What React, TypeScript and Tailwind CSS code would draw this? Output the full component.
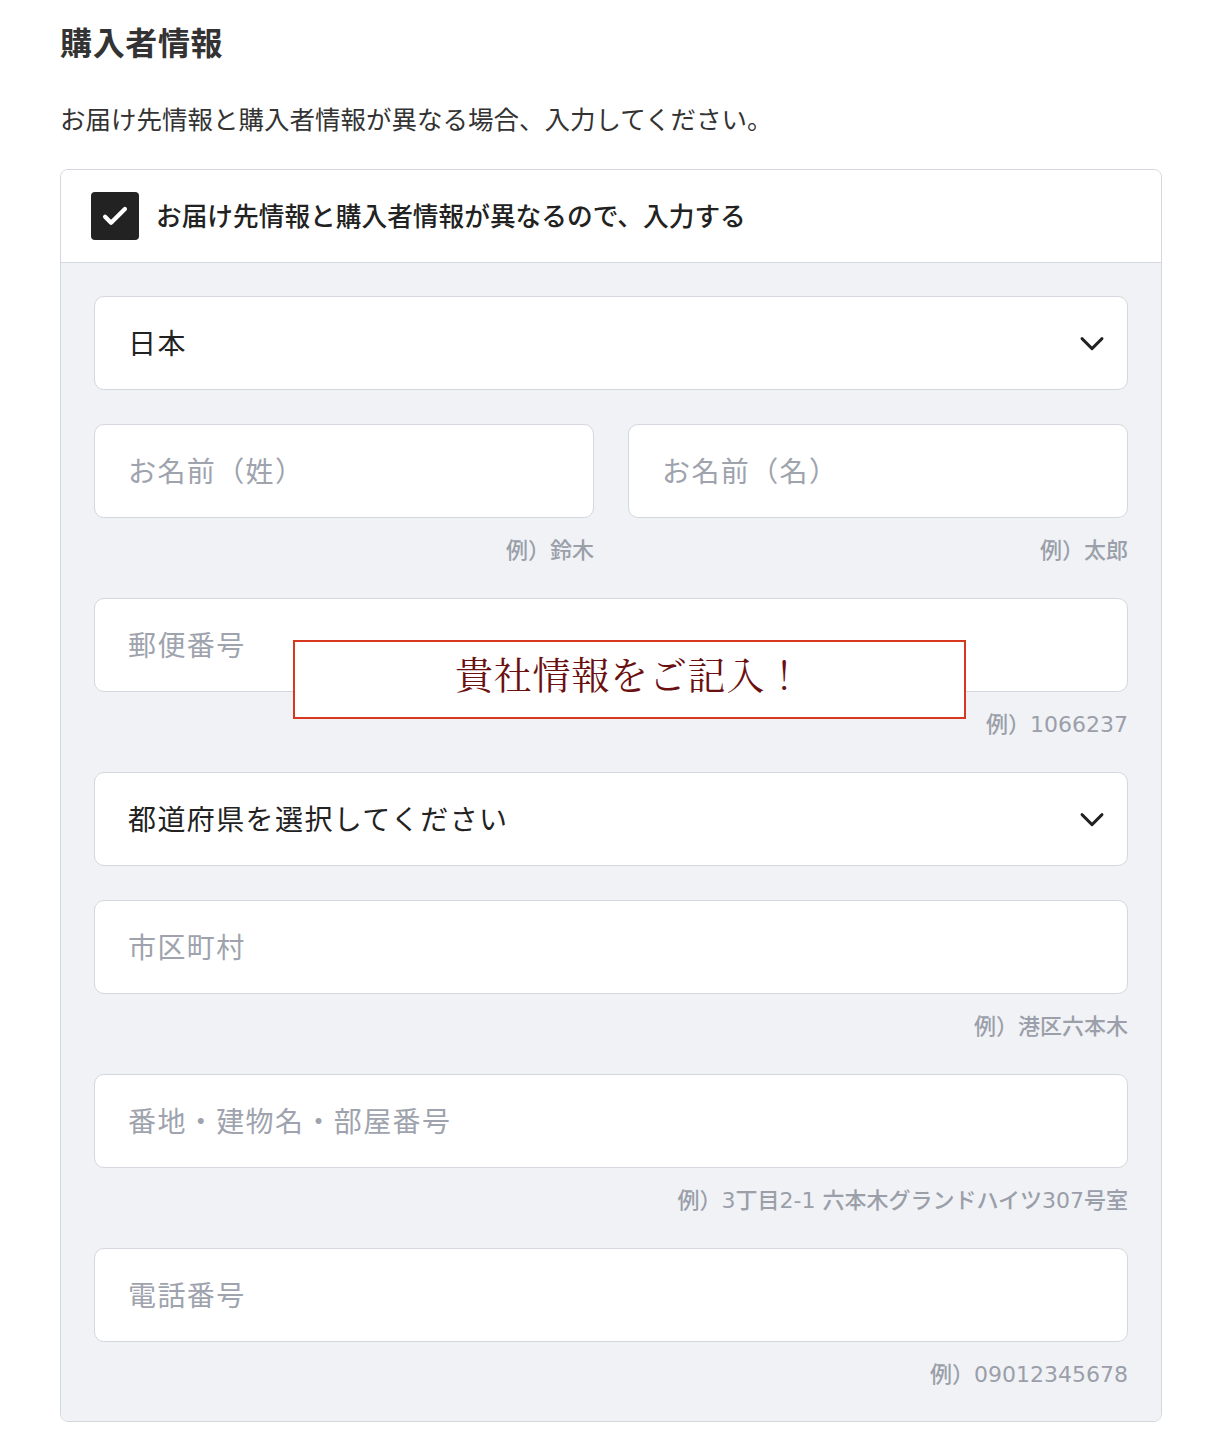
import React from 'react';

const font = 'font-["Liberation_Sans","Noto_Sans_CJK_JP",sans-serif]';

const inputClass =
  'block h-[94px] w-full rounded-[10px] border border-[#d4d7dd] bg-white pl-[33px] pr-[60px] pt-[4px] text-[28px] tracking-[0.05em] text-[#222] outline-none placeholder:text-[#9ea3ad] appearance-none';

const Chevron = () => (
  <svg
    className="pointer-events-none absolute right-[21px] top-1/2 -translate-y-1/2"
    width="30"
    height="30"
    viewBox="0 0 24 24"
    fill="none"
    stroke="#222"
    strokeWidth="2.3"
    strokeLinecap="round"
    strokeLinejoin="round"
  >
    <path d="M4 8.5l8 8 8-8" />
  </svg>
);

type FieldProps = {
  placeholder: string;
  hint?: string;
};

const Field: React.FC<FieldProps> = ({ placeholder, hint }) => (
  <div className="flex-1">
    <input type="text" placeholder={placeholder} className={inputClass} />
    {hint && (
      <p className='mt-[20px] h-[26px] text-right font-["DejaVu_Sans","Noto_Sans_CJK_JP",sans-serif] text-[22px] font-medium leading-[26px] text-[#9a9fa9]'>
        {hint}
      </p>
    )}
  </div>
);

const Select: React.FC<{ value: string; options: { value: string; label: string }[] }> = ({ value, options }) => (
  <div className="relative">
    <select defaultValue={value} className={`${inputClass} ${font}`}>
      {options.map((o) => (
        <option key={o.value} value={o.value}>
          {o.label}
        </option>
      ))}
    </select>
    <Chevron />
  </div>
);

const App: React.FC = () => {
  return (
    <div className={`min-h-[1448px] bg-white pl-[60px] pt-[20px] text-[#333] ${font}`}>
      <div className="w-[1102px]">
        {/* Title */}
        <h2 className="text-[32px] font-bold leading-[48px] tracking-[0.02em] text-[#333]">購入者情報</h2>
        <p className="mt-[32px] text-[25.5px] leading-[40px] text-[#333]">
          お届け先情報と購入者情報が異なる場合、入力してください。
        </p>

        {/* Card */}
        <div className="relative mt-[29px] overflow-hidden rounded-[8px] border border-[#d4d7dd]">
          <label className="flex h-[93px] items-center gap-[17px] border-b border-[#d4d7dd] bg-white px-[30px]">
            <span className="flex h-[48px] w-[48px] items-center justify-center rounded-[4px] bg-[#222]">
              <svg width="34" height="34" viewBox="0 0 24 24" fill="none" stroke="#fff" strokeWidth="3" strokeLinecap="round" strokeLinejoin="round">
                <path d="M5 12.5l4.2 4.2L19 7" />
              </svg>
            </span>
            <span className="pt-[2px] text-[25.7px] font-medium text-[#222]">
              お届け先情報と購入者情報が異なるので、入力する
            </span>
          </label>

          <div className="flex flex-col gap-[34px] bg-[#f1f2f6] px-[33px] pb-[33px] pt-[33px]">
            <Select value="JP" options={[{ value: 'JP', label: '日本' }]} />
            <div className="flex gap-[34px]">
              <Field placeholder="お名前（姓）" hint="例）鈴木" />
              <Field placeholder="お名前（名）" hint="例）太郎" />
            </div>
            <Field placeholder="郵便番号" hint="例）1066237" />
            <Select value="" options={[{ value: '', label: '都道府県を選択してください' }]} />
            <Field placeholder="市区町村" hint="例）港区六本木" />
            <Field placeholder="番地・建物名・部屋番号" hint="例）3丁目2-1 六本木グランドハイツ307号室" />
            <Field placeholder="電話番号" hint="例）09012345678" />
          </div>

          {/* Callout */}
          <div className="absolute left-[232px] top-[470px] flex h-[79px] w-[673px] items-center justify-center border-2 border-[#d6371f] bg-white">
            <span className='pb-[14px] font-["Noto_Serif_CJK_JP","Liberation_Serif",serif] text-[38px] tracking-[0.02em] text-[#6b1010]'>
              貴社情報をご記入！
            </span>
          </div>
        </div>
      </div>
    </div>
  );
};

export default App;
